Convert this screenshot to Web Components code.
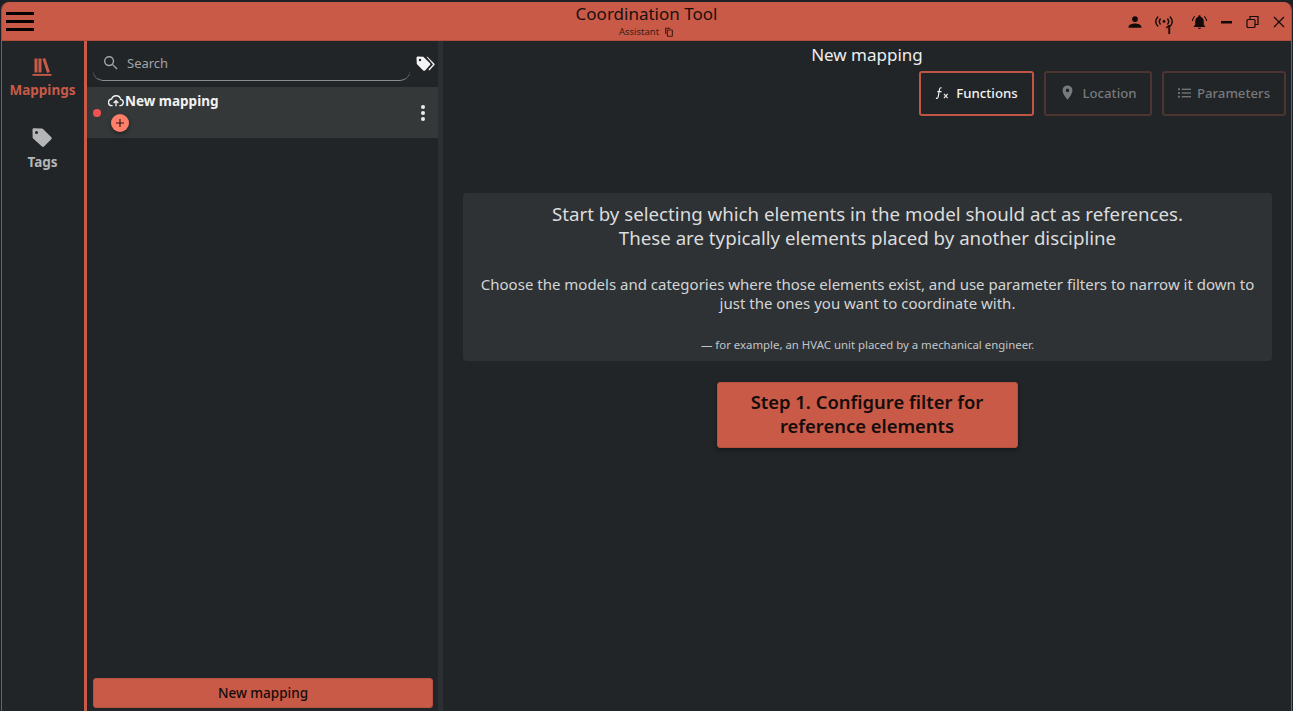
<!DOCTYPE html>
<html>
<head>
<meta charset="utf-8">
<title>Coordination Tool</title>
<style>
    html, body {
        margin: 0;
        height: 100%;
        background: #1c2127;
        overflow: hidden;
    }
    body {
        font-family: "Noto Sans", "Open Sans", sans-serif;
    }
</style>
</head>
<body>
<app-window>
    <title-bar slot="top" heading="Coordination Tool" sub="Assistant"></title-bar>
    <nav-rail slot="rail"></nav-rail>
    <mapping-list slot="list"></mapping-list>
    <mapping-detail slot="main"></mapping-detail>
</app-window>

<script>
class AppWindow extends HTMLElement {
    constructor() {
        super();
        this.attachShadow({ mode: "open" });
        this.shadowRoot.innerHTML = `
            <style>
                :host {
                    display: flex;
                    flex-direction: column;
                    height: 709px;
                    margin: 2px 1px 0;
                    background: #212528;
                    border-left: 1px solid #a34c3d;
                    border-right: 1px solid #a34c3d;
                    border-radius: 8px 8px 0 0;
                    overflow: hidden;
                }
                .body {
                    flex: 1;
                    display: flex;
                    min-height: 0;
                }
                .rail {
                    width: 82px;
                    flex: none;
                    border-right: 3px solid #c95a47;
                }
                .list {
                    width: 351px;
                    flex: none;
                    display: flex;
                }
                .gutter {
                    width: 5px;
                    flex: none;
                    background: #2b2f33;
                }
                .main {
                    flex: 1;
                    min-width: 0;
                    display: flex;
                }
            </style>
            <slot name="top"></slot>
            <div class="body">
                <div class="rail"><slot name="rail"></slot></div>
                <div class="list"><slot name="list"></slot></div>
                <div class="gutter"></div>
                <div class="main"><slot name="main"></slot></div>
            </div>
        `;
    }
}

class TitleBar extends HTMLElement {
    constructor() {
        super();
        this.attachShadow({ mode: "open" });
        this.shadowRoot.innerHTML = `
            <style>
                :host {
                    display: grid;
                    grid-template-columns: 1fr auto 1fr;
                    align-items: center;
                    height: 39px;
                    background: #c95a47;
                    color: #1a0f0d;
                    box-shadow: inset 0 -1px 0 #b34e3d;
                }
                .burger {
                    display: flex;
                    flex-direction: column;
                    gap: 5px;
                    margin-left: 4px;
                    width: 28px;
                }
                .burger i {
                    display: block;
                    height: 3px;
                    background: #050303;
                }
                .center {
                    text-align: center;
                    line-height: 1;
                    margin-top: -2px;
                }
                .name {
                    font-size: 17px;
                    line-height: 22px;
                }
                .sub {
                    display: flex;
                    justify-content: center;
                    align-items: center;
                    gap: 5px;
                    font-size: 9.5px;
                    line-height: 13px;
                    color: #3f1a13;
                }
                .actions {
                    display: flex;
                    justify-content: flex-end;
                    align-items: center;
                    padding-right: 6px;
                }
                .actions svg {
                    display: block;
                    fill: #120b0a;
                }
                .radio {
                    position: relative;
                    z-index: 1;
                    width: 20px;
                    height: 13px;
                    margin: -1px 17px 0 12px;
                }
                .radio span {
                    position: absolute;
                    left: 11px;
                    top: 9px;
                    font-size: 12px;
                    font-weight: 700;
                    line-height: 12px;
                    color: #120b0a;
                }
            </style>
            <div class="burger"><i></i><i></i><i></i></div>
            <div class="center">
                <div class="name"></div>
                <div class="sub">
                    <span class="subtext"></span>
                    <svg width="10" height="10" viewBox="0 0 24 24" fill="none" stroke="#3f1a13" stroke-width="2.6"><path d="M4 17V3h11"/><rect x="8" y="7" width="12" height="15" rx="1"/></svg>
                </div>
            </div>
            <div class="actions">
                <svg width="14" height="14" viewBox="0 0 24 24"><path d="M12 12a5 5 0 1 0 0-10 5 5 0 0 0 0 10zm0 2.500c-4 0-11 2-11 5.500V22h22v-2c0-3.500-7-5.500-11-5.500z"/></svg>
                <div class="radio">
                    <svg width="20" height="13" viewBox="0 0 24 14" style="fill:none;stroke:#120b0a;stroke-width:1.700;stroke-linecap:round">
                        <path d="M4.500 1.500C1.500 5 1.500 9 4.500 12.500"/>
                        <path d="M7.500 4C6 6 6 8 7.500 10"/>
                        <path d="M16.500 4C18 6 18 8 16.500 10"/>
                        <path d="M19.500 1.500C22.500 5 22.500 9 19.500 12.500"/>
                        <circle cx="12" cy="7" r="1.700" fill="#120b0a" stroke="none"/>
                    </svg>
                    <span>1</span>
                </div>
                <svg width="17" height="16" viewBox="0 0 24 22" style="margin-right:12px"><path d="M12 1.500c-1 0-1.600.7-1.600 1.600v.6C7.500 4.500 6 7 6 10v5l-2 2v1h16v-1l-2-2v-5c0-3-1.500-5.500-4.400-6.300v-.6c0-.9-.6-1.600-1.600-1.600zM10 19c0 1.200.9 2 2 2s2-.8 2-2z"/><path d="M5 2.500C2.800 4.300 1.500 6.800 1.300 9.500h1.500c.2-2.300 1.300-4.300 3.200-5.800zM19 2.500l-1 1.200c1.900 1.500 3 3.500 3.200 5.800h1.500c-.2-2.700-1.500-5.200-3.700-7z"/></svg>
                <svg width="13" height="14" viewBox="0 0 13 14" style="margin-right:13px"><rect x="1" y="6" width="11" height="2.500"/></svg>
                <svg width="13" height="14" viewBox="0 0 13 14" style="margin-right:14px;fill:none;stroke:#120b0a;stroke-width:1.200"><rect x="1" y="4.500" width="8" height="8" rx="1"/><path d="M4 4.500V1.500h8v8H9"/></svg>
                <svg width="12" height="12" viewBox="0 0 12 12" style="fill:none;stroke:#120b0a;stroke-width:1.200"><path d="M1 1l10 10M11 1L1 11"/></svg>
            </div>
        `;
    }

    connectedCallback() {
        this.shadowRoot.querySelector(".name").textContent = this.getAttribute("heading");
        this.shadowRoot.querySelector(".subtext").textContent = this.getAttribute("sub");
    }
}

class NavRail extends HTMLElement {
    constructor() {
        super();
        this.attachShadow({ mode: "open" });
        this.shadowRoot.innerHTML = `
            <style>
                :host {
                    display: flex;
                    flex-direction: column;
                    align-items: center;
                    gap: 27px;
                    padding: 15px 1px 0 0;
                    font-weight: 700;
                    font-size: 13.5px;
                    line-height: 18px;
                }
                .item {
                    display: flex;
                    flex-direction: column;
                    align-items: center;
                    gap: 3px;
                }
                .on { color: #c95a47; }
                .off { color: #b4b6b7; }
                svg { display: block; }
            </style>
            <div class="item on">
                <svg width="22" height="22" viewBox="0 0 22 22" fill="#c95a47"><path d="M3.500 2.500h3v14h-3zM7.500 2.500h3v14h-3zM11.500 3l2.700-.9 4.700 14-2.800.8z"/><rect x="1.500" y="18" width="19" height="1.800"/></svg>
                <span>Mappings</span>
            </div>
            <div class="item off">
                <svg width="24" height="24" viewBox="0 0 24 24" fill="#b4b6b7"><path d="M2.500 3.500c0-.8.6-1.300 1.300-1.300l8.200.3c.4 0 .8.200 1 .5l8.300 8.300c.6.600.6 1.400 0 2l-7.300 7.300c-.6.600-1.400.6-2 0l-8.900-8.200c-.3-.3-.5-.7-.5-1.100zM6.500 5a1.500 1.500 0 1 0 0 3 1.500 1.500 0 0 0 0-3z" fill-rule="evenodd"/></svg>
                <span>Tags</span>
            </div>
        `;
    }
}

class MappingRow extends HTMLElement {
    constructor() {
        super();
        this.attachShadow({ mode: "open" });
        this.shadowRoot.innerHTML = `
            <style>
                :host {
                    display: flex;
                    align-items: stretch;
                    height: 51px;
                    background: #343839;
                    position: relative;
                }
                .dot {
                    width: 8px;
                    height: 8px;
                    border-radius: 50%;
                    background: #ef5350;
                    align-self: center;
                    margin-left: 6px;
                    flex: none;
                }
                .text {
                    flex: 1;
                    padding: 5px 0 0 7px;
                }
                .title {
                    display: flex;
                    align-items: center;
                    gap: 1px;
                    color: #f2f2f2;
                    font-weight: 700;
                    font-size: 13.5px;
                    line-height: 18px;
                }
                .add {
                    width: 18px;
                    height: 18px;
                    border-radius: 50%;
                    background: #ff7f6b;
                    margin: 4px 0 0 3px;
                    display: flex;
                    align-items: center;
                    justify-content: center;
                    box-shadow: 0 2px 4px rgba(0, 0, 0, 0.4);
                }
                .more {
                    display: flex;
                    flex-direction: column;
                    gap: 2px;
                    align-self: center;
                    margin-right: 13px;
                }
                .more i {
                    width: 4px;
                    height: 4px;
                    border-radius: 50%;
                    background: #ececec;
                }
            </style>
            <span class="dot"></span>
            <div class="text">
                <div class="title">
                    <svg width="16" height="14" viewBox="0 0 24 20" fill="none" stroke="#f2f2f2" stroke-width="2"><path d="M7 17H6a5 5 0 0 1-.5-10A7 7 0 0 1 19 7.500 4.800 4.800 0 0 1 18.500 17H17"/><path d="M12 18V10M8.500 13L12 9.500l3.500 3.500"/></svg>
                    <slot></slot>
                </div>
                <div class="add">
                    <svg width="8" height="8" viewBox="0 0 10 10" stroke="#2a1512" stroke-width="1.400"><path d="M5 0v10M0 5h10"/></svg>
                </div>
            </div>
            <div class="more"><i></i><i></i><i></i></div>
        `;
    }
}

class MappingList extends HTMLElement {
    constructor() {
        super();
        this.attachShadow({ mode: "open" });
        this.shadowRoot.innerHTML = `
            <style>
                :host {
                    display: flex;
                    flex-direction: column;
                    flex: 1;
                    min-width: 0;
                }
                .head {
                    display: flex;
                    align-items: flex-start;
                    height: 46px;
                    box-sizing: border-box;
                    padding: 6px 0 0 6px;
                }
                .search {
                    width: 317px;
                    height: 34px;
                    box-sizing: border-box;
                    display: flex;
                    align-items: center;
                    gap: 9px;
                    padding: 0 0 2px 10px;
                    border-bottom: 1.5px solid #8b8d8e;
                    border-radius: 0 0 10px 10px;
                    color: #a2a4a5;
                    font-size: 13px;
                }
                .tags {
                    margin: 9px 0 0 6px;
                    display: block;
                }
                .rows { flex: 1; }
                .foot { padding: 0 5px 3px 6px; }
                button {
                    display: block;
                    width: 100%;
                    height: 30px;
                    border: 1px solid #b8513f;
                    border-radius: 3px;
                    background: #c95a47;
                    color: #140c0a;
                    font: 500 13.5px "Noto Sans", "Open Sans", sans-serif;
                    padding: 0;
                }
            </style>
            <div class="head">
                <div class="search">
                    <svg width="15" height="15" viewBox="0 0 16 16" fill="none" stroke="#a2a4a5" stroke-width="1.500"><circle cx="6.500" cy="6.500" r="4.700"/><path d="M10 10l5 5"/></svg>
                    <span>Search</span>
                </div>
                <svg class="tags" width="20" height="16" viewBox="0 0 20 16" fill="#f4f4f4"><path d="M0.500 2c0-.8.6-1.400 1.400-1.400l5.400.1 6.700 6.500c.6.600.6 1.300 0 1.900l-4.900 5.300c-.6.600-1.300.6-1.900 0L0.800 8z"/><path d="M11.500.8l6.900 6.900c.4.400.4 1 0 1.400l-5 5.300-1-.9 4.600-5.100-6.500-7.600z"/><circle cx="4" cy="4" r="1.200" fill="#212528"/></svg>
            </div>
            <div class="rows"><slot></slot></div>
            <div class="foot"><button>New mapping</button></div>
        `;
    }

    connectedCallback() {
        if (!this.querySelector("mapping-row")) {
            const row = document.createElement("mapping-row");
            row.textContent = "New mapping";
            this.appendChild(row);
        }
    }
}

class TabButton extends HTMLElement {
    constructor() {
        super();
        this.attachShadow({ mode: "open" });
        this.shadowRoot.innerHTML = `
            <style>
                :host {
                    display: flex;
                    align-items: center;
                    justify-content: center;
                    gap: 6px;
                    height: 45px;
                    box-sizing: border-box;
                    border: 2px solid #4c3531;
                    border-radius: 3px;
                    padding-bottom: 2px;
                    color: #77797b;
                    font-size: 13.2px;
                    font-weight: 500;
                }
                :host([active]) {
                    border-color: #bf5644;
                    color: #f2f2f2;
                }
            </style>
            <slot name="icon"></slot>
            <slot></slot>
        `;
    }
}

class MappingDetail extends HTMLElement {
    constructor() {
        super();
        this.attachShadow({ mode: "open" });
        this.shadowRoot.innerHTML = `
            <style>
                :host {
                    display: flex;
                    flex-direction: column;
                    flex: 1;
                    min-width: 0;
                    align-items: stretch;
                    color: #e4e5e5;
                }
                h1 {
                    margin: 2px 0 0;
                    font-size: 17px;
                    font-weight: 400;
                    line-height: 23px;
                    text-align: center;
                    color: #eeeeee;
                }
                .tabs {
                    display: flex;
                    justify-content: flex-end;
                    gap: 10px;
                    margin: 5px 5px 0 0;
                }
                .card {
                    margin: 77px 19px 0 20px;
                    background: #2e3235;
                    border-radius: 4px;
                    text-align: center;
                    height: 168px;
                    box-sizing: border-box;
                    padding-top: 9px;
                }
                .lead {
                    font-size: 18.7px;
                    line-height: 24px;
                    color: #dcdddd;
                }
                .body {
                    margin-top: 25px;
                    font-size: 15px;
                    line-height: 19px;
                    color: #d4d5d6;
                    padding: 0 8px;
                }
                .note {
                    margin-top: 24px;
                    font-size: 11.4px;
                    line-height: 15px;
                    color: #c4c5c6;
                }
                .cta {
                    align-self: center;
                    margin: 21px 0 0;
                    width: 301px;
                    height: 66px;
                    border: 1px solid #b8513f;
                    border-radius: 3px;
                    background: #c95a47;
                    color: #140c0a;
                    font: 600 18.4px/24px "Noto Sans", "Open Sans", sans-serif;
                    box-shadow: 0 2px 4px rgba(0, 0, 0, 0.35);
                    padding: 0 20px 2px;
                }
                svg { display: block; }
            </style>
            <h1>New mapping</h1>
            <div class="tabs">
                <tab-button active style="width:115px">
                    <svg slot="icon" width="15" height="14" viewBox="0 0 16 14" fill="none" stroke="#f2f2f2" stroke-width="1.200"><path d="M7 1.500C5.500 1 5 2 4.700 3.500L3.500 10.500C3.200 12.500 2.500 13 1 12.500M2.500 5.500H7"/><path d="M9.500 8l4 4.500M13.500 8l-4 4.500"/></svg>
                    Functions
                </tab-button>
                <tab-button style="width:108px">
                    <svg slot="icon" width="17" height="17" viewBox="0 0 24 24" fill="#77797b"><path fill-rule="evenodd" d="M12 2a7 7 0 0 0-7 7c0 5 7 13 7 13s7-8 7-13a7 7 0 0 0-7-7zm0 4.500a2.500 2.500 0 1 1 0 5 2.500 2.500 0 0 1 0-5z"/></svg>
                    Location
                </tab-button>
                <tab-button style="width:124px">
                    <svg slot="icon" width="13" height="12" viewBox="0 0 14 12" fill="#77797b"><rect x="0" y="1" width="2" height="2"/><rect x="4" y="1.300" width="10" height="1.400"/><rect x="0" y="5" width="2" height="2"/><rect x="4" y="5.300" width="10" height="1.400"/><rect x="0" y="9" width="2" height="2"/><rect x="4" y="9.300" width="10" height="1.400"/></svg>
                    Parameters
                </tab-button>
            </div>
            <div class="card">
                <div class="lead">Start by selecting which elements in the model should act as references.<br>These are typically elements placed by another discipline</div>
                <div class="body">Choose the models and categories where those elements exist, and use parameter filters to narrow it down to just the ones you want to coordinate with.</div>
                <div class="note">— for example, an HVAC unit placed by a mechanical engineer.</div>
            </div>
            <button class="cta">Step 1. Configure filter for reference elements</button>
        `;
    }
}

customElements.define("app-window", AppWindow);
customElements.define("title-bar", TitleBar);
customElements.define("nav-rail", NavRail);
customElements.define("mapping-row", MappingRow);
customElements.define("mapping-list", MappingList);
customElements.define("tab-button", TabButton);
customElements.define("mapping-detail", MappingDetail);
</script>
</body>
</html>
